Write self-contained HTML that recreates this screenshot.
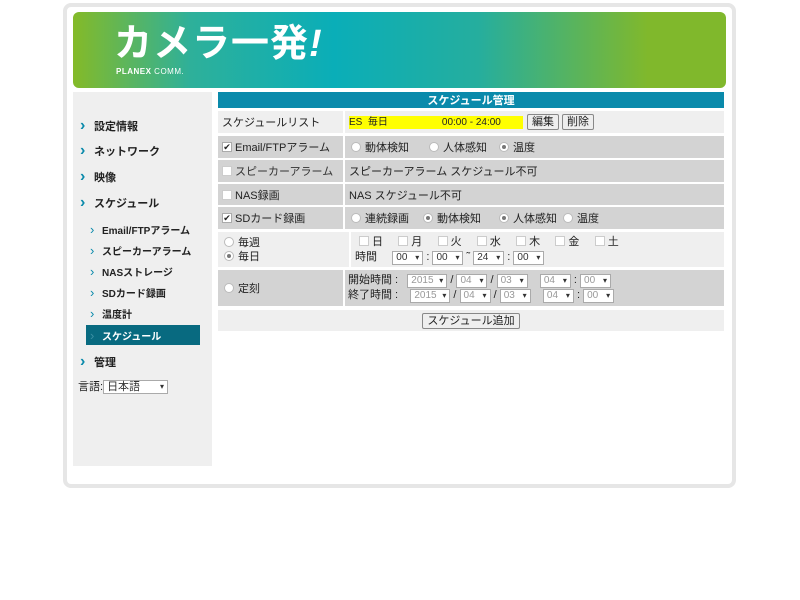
<!DOCTYPE html>
<html><head><meta charset="utf-8"><style>
*{margin:0;padding:0;box-sizing:border-box}
body{width:800px;height:600px;background:#fff;font-family:"Liberation Sans","Noto Sans CJK JP",sans-serif;font-size:11px;color:#222;position:relative;overflow:hidden}
.a{position:absolute}
.frame{left:63px;top:3px;width:673px;height:485px;border:4px solid #e6e6e6;border-radius:8px;background:#fff}
.banner{left:73px;top:12px;width:653px;height:76px;border-radius:6px;background:linear-gradient(90deg,#84ba28 0%,#2eb09a 18%,#0aaeb8 40%,#25ae9e 62%,#80b82c 88%)}
.side{left:73px;top:92px;width:139px;height:374px;background:#efefef}
.cell{position:absolute;display:flex;align-items:center;padding-left:4px;white-space:nowrap}
.l{background:#efefef}.d{background:#d3d3d3}
.nav{position:absolute;left:80px;font-size:11px;font-weight:bold;color:#222;line-height:14px}
.nav b{color:#0a8aab;font-size:16px;margin-right:7px;display:inline-block;width:7px}
.sub{position:absolute;left:90px;font-size:10px;font-weight:bold;color:#222;line-height:13px}
.sub b{color:#0a8aab;font-size:13px;margin-right:5px;font-weight:normal;display:inline-block;width:7px}
.cb{display:inline-block;width:10px;height:10px;border:1px solid #aaa;background:#fff;margin-right:3px;vertical-align:-1px;font-size:9px;line-height:8px;text-align:center}
.rd{display:inline-block;width:10px;height:10px;border:1px solid #bbb;border-radius:50%;background:#fff;margin-right:4px;vertical-align:-1px;position:relative}
.rd.on:after{content:"";position:absolute;left:2px;top:2px;width:4px;height:4px;border-radius:50%;background:#777}
.btn{display:inline-block;border:1px solid #888;background:#eee;padding:0 4px;height:16px;line-height:14px;font-size:11px;border-radius:2px}
.sel{display:inline-block;border:1px solid #aaa;background:#fff;height:14px;line-height:12px;font-size:10px;padding:0 3px;color:#333;white-space:nowrap;min-width:31px}
.sel.y{min-width:40px}
.sel.g{color:#999}
.sel:after{content:" ▾";font-size:8px;color:#333;float:right}
</style></head><body>
<div class="a frame"></div>
<div class="a banner"></div>
<div class="a" style="left:114px;top:20px;color:#fff;font-size:38px;font-weight:bold;line-height:48px;letter-spacing:1px">カメラ一発<span style="font-style:italic">!</span></div>
<div class="a" style="left:116px;top:67px;color:#fff;font-size:8px;font-weight:bold;letter-spacing:0.5px">PLANEX <span style="font-weight:normal">COMM.</span></div>
<div class="a side"></div>
<div class="nav" style="top:119px"><b>›</b>設定情報</div>
<div class="nav" style="top:144px"><b>›</b>ネットワーク</div>
<div class="nav" style="top:170px"><b>›</b>映像</div>
<div class="nav" style="top:196px"><b>›</b>スケジュール</div>
<div class="sub" style="top:223px"><b>›</b>Email/FTPアラーム</div>
<div class="sub" style="top:244px"><b>›</b>スピーカーアラーム</div>
<div class="sub" style="top:265px"><b>›</b>NASストレージ</div>
<div class="sub" style="top:286px"><b>›</b>SDカード録画</div>
<div class="sub" style="top:307px"><b>›</b>温度計</div>
<div class="a" style="left:86px;top:325px;width:114px;height:20px;background:#086a80"></div>
<div class="sub" style="top:329px;color:#fff"><b style="color:#3a8fa3">›</b>スケジュール</div>
<div class="nav" style="top:355px"><b>›</b>管理</div>
<div class="a" style="left:78px;top:380px;font-size:11px;line-height:14px;white-space:nowrap">言語:<span class="sel" style="width:65px;font-size:11px;vertical-align:top">日本語</span></div>

<div class="cell" style="left:218px;top:92px;width:506px;height:16px;background:#0a8aab;color:#fff;font-weight:bold;font-size:11px;justify-content:center;padding:0">スケジュール管理</div>

<div class="cell l" style="left:218px;top:111px;width:125px;height:22px">スケジュールリスト</div>
<div class="cell l" style="left:345px;top:111px;width:379px;height:22px"><span style="background:#ffff00;width:174px;height:13px;line-height:13px;font-size:10px;display:inline-block">ES&nbsp; 毎日<span style="margin-left:54px">00:00 - 24:00</span></span><span class="btn" style="margin-left:4px">編集</span><span class="btn" style="margin-left:3px">削除</span></div>

<div class="cell d" style="left:218px;top:136px;width:125px;height:22px"><span class="cb">✔</span>Email/FTPアラーム</div>
<div class="cell d" style="left:345px;top:136px;width:379px;height:22px;padding-left:6px"><span class="rd"></span>動体検知<span class="rd" style="margin-left:20px"></span>人体感知<span class="rd on" style="margin-left:12px"></span>温度</div>

<div class="cell d" style="left:218px;top:160px;width:125px;height:22px;color:#333"><span class="cb" style="border-color:#ccc"></span>スピーカーアラーム</div>
<div class="cell d" style="left:345px;top:160px;width:379px;height:22px">スピーカーアラーム スケジュール不可</div>

<div class="cell d" style="left:218px;top:184px;width:125px;height:21px"><span class="cb" style="border-color:#ccc"></span>NAS録画</div>
<div class="cell d" style="left:345px;top:184px;width:379px;height:21px">NAS スケジュール不可</div>

<div class="cell d" style="left:218px;top:207px;width:125px;height:22px"><span class="cb">✔</span>SDカード録画</div>
<div class="cell d" style="left:345px;top:207px;width:379px;height:22px;padding-left:6px"><span class="rd"></span>連続録画<span class="rd on" style="margin-left:14px"></span>動体検知<span class="rd on" style="margin-left:18px"></span>人体感知<span class="rd" style="margin-left:6px"></span>温度</div>

<div class="cell l" style="left:218px;top:232px;width:131px;height:35px;flex-direction:column;align-items:flex-start;justify-content:center;padding-left:6px;line-height:14px"><div><span class="rd"></span>毎週</div><div><span class="rd on"></span>毎日</div></div>
<div class="cell l" style="left:351px;top:232px;width:373px;height:35px;flex-direction:column;align-items:flex-start;justify-content:center;padding-left:4px;line-height:15px">
<div style="padding-left:4px"><span class="cb" style="border-color:#ccc"></span>日&nbsp;&nbsp;&nbsp;&nbsp;&nbsp;<span class="cb" style="border-color:#ccc"></span>月&nbsp;&nbsp;&nbsp;&nbsp;&nbsp;<span class="cb" style="border-color:#ccc"></span>火&nbsp;&nbsp;&nbsp;&nbsp;&nbsp;<span class="cb" style="border-color:#ccc"></span>水&nbsp;&nbsp;&nbsp;&nbsp;&nbsp;<span class="cb" style="border-color:#ccc"></span>木&nbsp;&nbsp;&nbsp;&nbsp;&nbsp;<span class="cb" style="border-color:#ccc"></span>金&nbsp;&nbsp;&nbsp;&nbsp;&nbsp;<span class="cb" style="border-color:#ccc"></span>土</div>
<div>時間&nbsp;&nbsp;&nbsp;&nbsp;&nbsp;<span class="sel">00</span> : <span class="sel">00</span> ˜ <span class="sel">24</span> : <span class="sel">00</span></div></div>

<div class="cell d" style="left:218px;top:270px;width:125px;height:36px;padding-left:6px"><span class="rd"></span>定刻</div>
<div class="cell d" style="left:345px;top:270px;width:379px;height:36px;flex-direction:column;align-items:flex-start;justify-content:center;padding-left:3px;line-height:15px">
<div>開始時間 :&nbsp;&nbsp; <span class="sel g y">2015</span> / <span class="sel g">04</span> / <span class="sel g">03</span>&nbsp;&nbsp;&nbsp; <span class="sel g">04</span> : <span class="sel g">00</span></div>
<div>終了時間 :&nbsp;&nbsp;&nbsp; <span class="sel g y">2015</span> / <span class="sel g">04</span> / <span class="sel g">03</span>&nbsp;&nbsp;&nbsp; <span class="sel g">04</span> : <span class="sel g">00</span></div></div>

<div class="cell l" style="left:218px;top:310px;width:506px;height:21px;justify-content:center;padding:0"><span class="btn">スケジュール追加</span></div>
</body></html>
